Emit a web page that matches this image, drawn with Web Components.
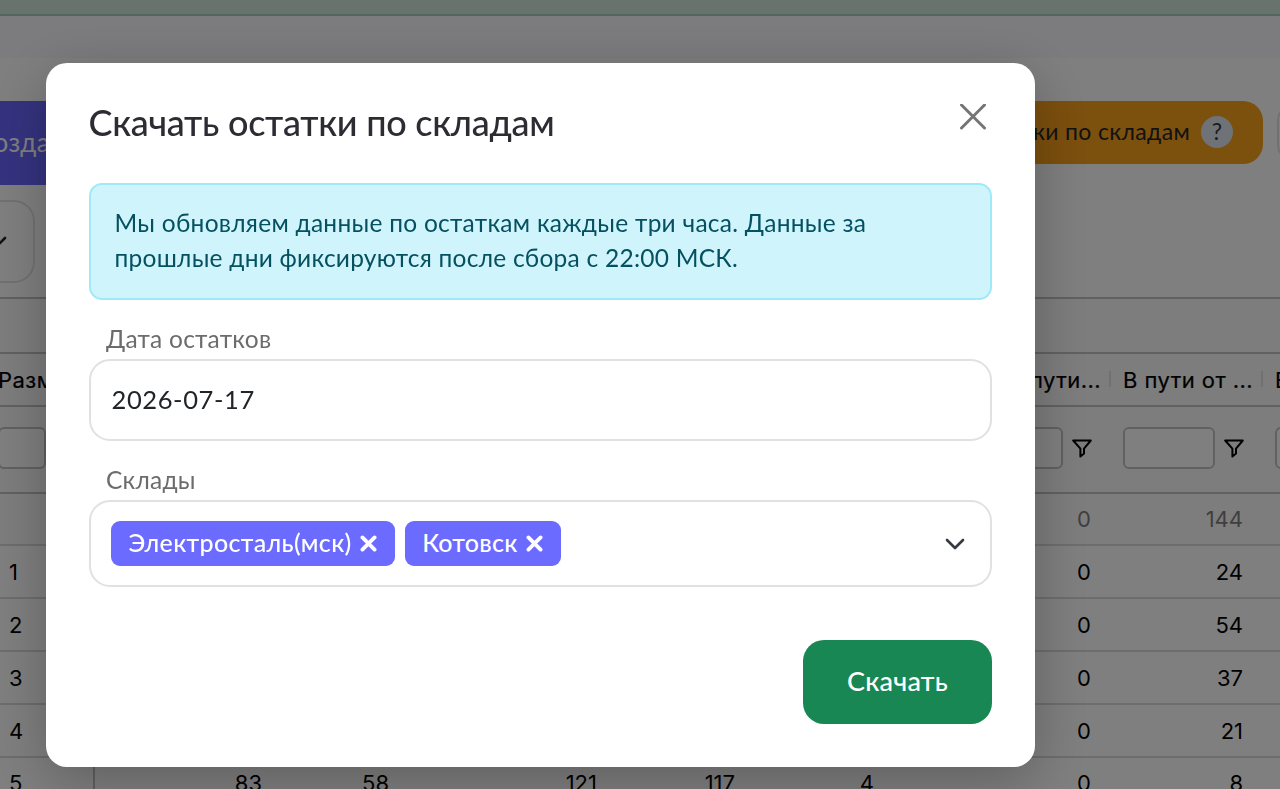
<!DOCTYPE html>
<html lang="ru">
<head>
<meta charset="utf-8">
<title>Остатки по складам</title>
<style>
  body {
    margin: 0;
    height: 789px;
    overflow: hidden;
    background: #fff;
    font-family: Lato, "Noto Sans", sans-serif;
  }
</style>
</head>
<body>
<stock-page></stock-page>
<modal-dialog heading="Скачать остатки по складам">
  <info-alert>
    <span style="letter-spacing: 0.27px">Мы обновляем данные по остаткам каждые три часа. Данные за</span><br>
    <span style="letter-spacing: 0.25px">прошлые дни фиксируются после сбора с 22:00 МСК.</span>
  </info-alert>
  <form-field label="Дата остатков" style="--height: 82px">2026-07-17</form-field>
  <form-field label="Склады" style="--height: 87px" select>
    <tag-chip style="--spacing: 0.33px">Электросталь(мск)</tag-chip>
    <tag-chip style="--spacing: 0.25px">Котовск</tag-chip>
  </form-field>
  <submit-button slot="footer">Скачать</submit-button>
</modal-dialog>

<script>
function attach(element, html) {
  const template = document.createElement("template");
  template.innerHTML = html;
  element.attachShadow({ mode: "open" });
  element.shadowRoot.appendChild(template.content.cloneNode(true));
}

class StockPage extends HTMLElement {
  constructor() {
    super();
    attach(this, `
<style>
  :host { display: block; width: 1280px; height: 789px; overflow: hidden; }
  .notice { height: 14px; background: #d1e7dd; border-bottom: 2px solid #a3cfbb; }
  .bar { height: 42px; background: #f8f9fc; }
  .toolbar { height: 239px; padding-top: 43px; box-sizing: border-box; }
  .row { display: flex; justify-content: space-between; height: 99px; margin: 0 -40px 0 -60px; align-items: flex-start; }
  .create {
    width: 260px; height: 84px; box-sizing: border-box; padding: 0 0 3px 36px;
    display: flex; align-items: center; background: #6a66ff; color: #fff;
    font-size: 26px; letter-spacing: 0.4px; border-radius: 20px;
  }
  .right { display: flex; gap: 14px; }
  .stocks {
    height: 63px; width: 400px; box-sizing: border-box; padding-right: 30px;
    display: flex; align-items: center; justify-content: flex-end; gap: 11px;
    background: #f9a01b; border-radius: 20px; font-size: 23px; letter-spacing: 0.35px; color: #212529;
  }
  .stocks span { padding-bottom: 3px; }
  .help {
    width: 32px; height: 32px; border-radius: 50%; background: #dfe5ed; margin-top: -1px;
    display: flex; align-items: center; justify-content: center; font-size: 23px; color: #343a40;
  }
  .more { width: 43px; height: 63px; box-sizing: border-box; border: 2px solid #dee2e6; border-radius: 20px; }
  .select {
    width: 195px; height: 83px; box-sizing: border-box; margin-left: -160px; padding-right: 26px;
    border: 2px solid #dee2e6; border-radius: 21px;
    display: flex; align-items: center; justify-content: flex-end;
  }
</style>
<div class="notice"></div>
<div class="bar"></div>
<div class="toolbar">
  <div class="row">
    <div class="create">Создать</div>
    <div class="right">
      <div class="stocks"><span>Остатки по складам</span> <div class="help"><span>?</span></div></div>
      <div class="more"></div>
    </div>
  </div>
  <div class="select">
    <svg width="20" height="12" viewBox="0 0 20 12" fill="none" stroke="#212529" stroke-width="2.6" stroke-linecap="round" stroke-linejoin="round"><path d="M2 2l8 8 8-8"/></svg>
  </div>
</div>
<stock-grid></stock-grid>`);
  }
}

class StockGrid extends HTMLElement {
  constructor() {
    super();
    const funnel = `<svg width="20" height="19" viewBox="0 0 20 19" fill="none" stroke="#000" stroke-width="2" stroke-linejoin="round"><path d="M1.2 1.5h17.6L12 9.7v4.8l-3.6 3V9.7z"/></svg>`;
    const titles = ["Разм", "", "", "", "", "", "В пути...", "В пути от ...", "В"];
    const rows = [
      ["", "", "", "", "", "", "0", "144", ""],
      ["1", "", "", "", "", "", "0", "24", ""],
      ["2", "", "", "", "", "", "0", "54", ""],
      ["3", "", "", "", "", "", "0", "37", ""],
      ["4", "", "", "", "", "", "0", "21", ""],
      ["5", "83", "58", "121", "117", "4", "0", "8", ""],
    ];
    const head = titles.map((t) => `<div class="th"><span>${t}</span></div>`).join("");
    const filters = titles.map(() => `<div class="filter"><i></i>${funnel}</div>`).join("");
    const body = rows
      .map((r, i) => `<div class="line data${i ? "" : " total"}">${r.map((c) => `<div class="td">${c}</div>`).join("")}</div>`)
      .join("");
    attach(this, `
<style>
  :host { display: block; font: 22px Inter, sans-serif; color: #000; }
  .line {
    display: grid;
    grid-template-columns: 95px 188px 127px 208px 138px 139px 217px 152px 152px;
    box-sizing: border-box; border-top: 2px solid #c2c2c2;
  }
  .group { height: 55px; background: #fafafa; }
  .head { height: 53px; background: #fafafa; letter-spacing: 0.45px; }
  .filters { height: 86.5px; background: #fafafa; }
  .th { display: flex; align-items: center; justify-content: flex-end; padding-right: 11px; white-space: nowrap; position: relative; -webkit-text-stroke: 0.2px; }
  .th:first-child { justify-content: flex-start; margin-left: -2px; }
  .th:nth-child(n + 8) { justify-content: flex-start; padding: 0 0 0 11px; }
  .th:nth-child(n + 7)::after { content: ""; position: absolute; right: 1px; top: 17px; width: 2px; height: 16px; background: #e2e2e2; }
  .filter { display: flex; align-items: center; gap: 9px; padding: 0 20px 2px 11px; }
  .filter i { flex: 1; height: 42px; box-sizing: border-box; border: 2px solid #c2c2c2; border-radius: 6px; background: #fff; }
  .filter:first-child { padding-left: 0; margin-left: -2px; }
  .filter:first-child i { flex: none; width: 48px; }
  .data { height: 52.9px; border-top-color: #dadada; }
  .total { border-top-color: #c2c2c2; color: #7f7f7f; background: #fafafa; }
  .td { display: flex; align-items: center; justify-content: flex-end; padding: 0 21px 0 0; }
  .td:first-child { justify-content: flex-start; padding: 0 0 0 9px; border-right: 2px solid #c2c2c2; }
</style>
<div class="line group"></div>
<div class="line head">${head}</div>
<div class="line filters">${filters}</div>
${body}`);
  }
}

class ModalDialog extends HTMLElement {
  constructor() {
    super();
    attach(this, `
<style>
  :host { position: fixed; inset: 0; display: block; box-sizing: border-box; padding: 63px 245.5px 22px 46px; background: rgba(0, 0, 0, 0.5); }
  .panel {
    height: 704px; box-sizing: border-box; padding: 42px 42.5px 43px; background: #fff;
    border-radius: 21px; box-shadow: 0 14px 56px rgba(0, 0, 0, 0.26);
    display: flex; flex-direction: column;
  }
  header { display: flex; justify-content: space-between; height: 78px; }
  h2 { margin: -1.5px 0 0; font-size: 36px; font-weight: 500; line-height: 36px; letter-spacing: -0.27px; color: #2c2c33; white-space: nowrap; }
  .close { margin: -1px 5px 0 0; width: 28px; height: 28px; }
  footer { margin-top: auto; display: flex; justify-content: flex-end; }
</style>
<div class="panel">
  <header>
    <h2></h2>
    <svg class="close" viewBox="0 0 28 28" stroke="#757575" stroke-width="3" stroke-linecap="round"><path d="M2.5 1l23 23M25.5 1l-23 23"/></svg>
  </header>
  <slot></slot>
  <footer><slot name="footer"></slot></footer>
</div>`);
  }

  connectedCallback() {
    this.shadowRoot.querySelector("h2").textContent = this.getAttribute("heading");
  }
}

class InfoAlert extends HTMLElement {
  constructor() {
    super();
    attach(this, `
<style>
  :host {
    display: block; height: 117px; box-sizing: border-box; padding: 20px 24px;
    background: #cff4fc; border: 2px solid #9eeaf9; border-radius: 13px;
    color: #055160; font-size: 24.5px; line-height: 35px; white-space: nowrap;
  }
</style>
<slot></slot>`);
  }
}

class FormField extends HTMLElement {
  constructor() {
    super();
    attach(this, `
<style>
  :host { display: block; }
  label { display: block; height: 59px; box-sizing: border-box; padding: 20.5px 0 0 17.5px; font-size: 24.5px; line-height: 35px; letter-spacing: 0.25px; color: #6c6c6c; }
  .box {
    height: var(--height); box-sizing: border-box; padding: 0 21px 3px;
    border: 2px solid #dfe1e3; border-radius: 21px;
    display: flex; align-items: center; gap: 10px;
    font-size: 25.5px; letter-spacing: 0.6px; color: #212529;
  }
  svg { display: none; margin-left: auto; margin-right: 4px; }
  :host([select]) .box { padding: 0 21px 0 20.5px; }
  :host([select]) svg { display: block; }
</style>
<label></label>
<div class="box">
  <slot></slot>
  <svg width="20" height="12" viewBox="0 0 20 12" fill="none" stroke="#343a40" stroke-width="2.6" stroke-linecap="round" stroke-linejoin="round"><path d="M2 2l8 8 8-8"/></svg>
</div>`);
  }

  connectedCallback() {
    this.shadowRoot.querySelector("label").textContent = this.getAttribute("label");
  }
}

class TagChip extends HTMLElement {
  constructor() {
    super();
    attach(this, `
<style>
  :host {
    display: flex; align-items: center; gap: 8px; height: 45px; padding: 0 18px 0 17.5px;
    background: #6c6bff; border-radius: 9px; color: #fff;
    font-size: 25px; font-weight: 500; letter-spacing: var(--spacing);
  }
  span { padding-bottom: 3px; }
</style>
<span><slot></slot></span>
<svg width="17" height="17" viewBox="0 0 17 17" stroke="#fff" stroke-width="3.8" stroke-linecap="round"><path d="M2.4 2.4l12.2 12.2M14.6 2.4L2.4 14.6"/></svg>`);
  }
}

class SubmitButton extends HTMLElement {
  constructor() {
    super();
    attach(this, `
<style>
  :host {
    display: flex; align-items: center; justify-content: center; width: 189px; height: 84px;
    box-sizing: border-box; padding-bottom: 4px;
    background: #198754; border-radius: 21px; color: #fff; font-size: 27px; font-weight: 500; letter-spacing: 0.2px;
  }
</style>
<slot></slot>`);
  }
}

customElements.define("stock-grid", StockGrid);
customElements.define("stock-page", StockPage);
customElements.define("info-alert", InfoAlert);
customElements.define("tag-chip", TagChip);
customElements.define("form-field", FormField);
customElements.define("submit-button", SubmitButton);
customElements.define("modal-dialog", ModalDialog);
</script>
</body>
</html>
